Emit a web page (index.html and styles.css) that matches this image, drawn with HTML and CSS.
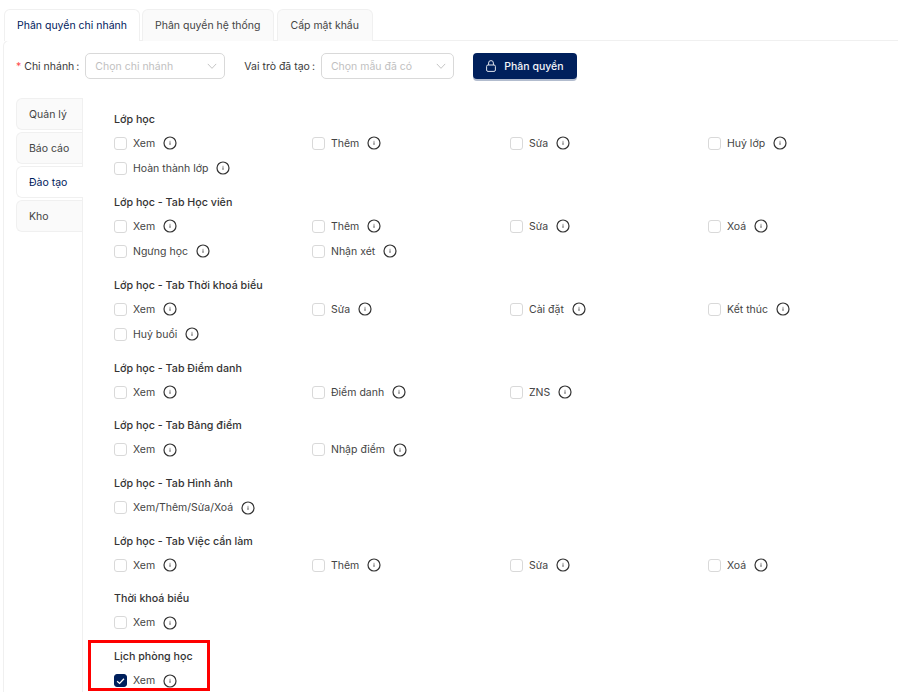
FILE: index.html
```html
<!DOCTYPE html>
<html lang="vi">
<head>
<meta charset="utf-8">
<title>Phân quyền</title>
<link rel="stylesheet" href="styles.css">
</head>
<body>
<svg width="0" height="0" class="defs"><defs>
<symbol id="info" viewBox="0 0 14 14"><circle cx="7" cy="7" r="6" fill="none" stroke="#333" stroke-width="1.2"/><path d="M7 4.9v.7M7 6.3v2.6" stroke="#555" stroke-width="1" fill="none"/></symbol>
</defs></svg>
<div class="tabs">
  <div class="tab active">Phân quyền chi nhánh</div>
  <div class="tab">Phân quyền hệ thống</div>
  <div class="tab">Cấp mật khẩu</div>
</div>
<div class="panel">
  <div class="filters">
    <span class="label"><span class="req">*</span> Chi nhánh<span class="colon">:</span></span>
    <div class="select s1"><span>Chọn chi nhánh</span><svg width="10" height="10" viewBox="0 0 12 12"><path d="M1 3.5 6 8.8l5-5.3" fill="none" stroke="#bfbfbf" stroke-width="1.1"/></svg></div>
    <span class="label l2">Vai trò đã tạo<span class="colon">:</span></span>
    <div class="select s2"><span>Chọn mẫu đã có</span><svg width="10" height="10" viewBox="0 0 12 12"><path d="M1 3.5 6 8.8l5-5.3" fill="none" stroke="#bfbfbf" stroke-width="1.1"/></svg></div>
    <button class="btn"><svg width="10" height="12" viewBox="0 0 10 12"><rect x="0.6" y="5" width="8.8" height="6.4" rx="1.4" fill="none" stroke="#dfe3ec"/><path d="M2.6 5V3a2.4 2.4 0 0 1 4.8 0v2" fill="none" stroke="#dfe3ec"/></svg>Phân quyền</button>
  </div>
  <div class="body">
    <div class="side">
      <div class="side-tab">Quản lý</div>
      <div class="side-tab">Báo cáo</div>
      <div class="side-tab on">Đào tạo</div>
      <div class="side-tab">Kho</div>
    </div>
    <div class="content">
      <section class="group"><h4>Lớp học</h4><div class="grid">
        <label class="item"><i class="box"></i>Xem<svg class="ic"><use href="#info"/></svg></label>
        <label class="item"><i class="box"></i>Thêm<svg class="ic"><use href="#info"/></svg></label>
        <label class="item"><i class="box"></i>Sửa<svg class="ic"><use href="#info"/></svg></label>
        <label class="item"><i class="box"></i>Huỷ lớp<svg class="ic"><use href="#info"/></svg></label>
        <label class="item"><i class="box"></i>Hoàn thành lớp<svg class="ic"><use href="#info"/></svg></label>
      </div></section>
      <section class="group"><h4>Lớp học - Tab Học viên</h4><div class="grid">
        <label class="item"><i class="box"></i>Xem<svg class="ic"><use href="#info"/></svg></label>
        <label class="item"><i class="box"></i>Thêm<svg class="ic"><use href="#info"/></svg></label>
        <label class="item"><i class="box"></i>Sửa<svg class="ic"><use href="#info"/></svg></label>
        <label class="item"><i class="box"></i>Xoá<svg class="ic"><use href="#info"/></svg></label>
        <label class="item"><i class="box"></i>Ngưng học<svg class="ic"><use href="#info"/></svg></label>
        <label class="item"><i class="box"></i>Nhận xét<svg class="ic"><use href="#info"/></svg></label>
      </div></section>
      <section class="group"><h4>Lớp học - Tab Thời khoá biểu</h4><div class="grid">
        <label class="item"><i class="box"></i>Xem<svg class="ic"><use href="#info"/></svg></label>
        <label class="item"><i class="box"></i>Sửa<svg class="ic"><use href="#info"/></svg></label>
        <label class="item"><i class="box"></i>Cài đặt<svg class="ic"><use href="#info"/></svg></label>
        <label class="item"><i class="box"></i>Kết thúc<svg class="ic"><use href="#info"/></svg></label>
        <label class="item"><i class="box"></i>Huỷ buổi<svg class="ic"><use href="#info"/></svg></label>
      </div></section>
      <section class="group"><h4>Lớp học - Tab Điểm danh</h4><div class="grid">
        <label class="item"><i class="box"></i>Xem<svg class="ic"><use href="#info"/></svg></label>
        <label class="item"><i class="box"></i>Điểm danh<svg class="ic"><use href="#info"/></svg></label>
        <label class="item"><i class="box"></i>ZNS<svg class="ic"><use href="#info"/></svg></label>
      </div></section>
      <section class="group"><h4>Lớp học - Tab Bảng điểm</h4><div class="grid">
        <label class="item"><i class="box"></i>Xem<svg class="ic"><use href="#info"/></svg></label>
        <label class="item"><i class="box"></i>Nhập điểm<svg class="ic"><use href="#info"/></svg></label>
      </div></section>
      <section class="group"><h4>Lớp học - Tab Hình ảnh</h4><div class="grid">
        <label class="item"><i class="box"></i>Xem/Thêm/Sửa/Xoá<svg class="ic"><use href="#info"/></svg></label>
      </div></section>
      <section class="group"><h4>Lớp học - Tab Việc cần làm</h4><div class="grid">
        <label class="item"><i class="box"></i>Xem<svg class="ic"><use href="#info"/></svg></label>
        <label class="item"><i class="box"></i>Thêm<svg class="ic"><use href="#info"/></svg></label>
        <label class="item"><i class="box"></i>Sửa<svg class="ic"><use href="#info"/></svg></label>
        <label class="item"><i class="box"></i>Xoá<svg class="ic"><use href="#info"/></svg></label>
      </div></section>
      <section class="group"><h4>Thời khoá biểu</h4><div class="grid">
        <label class="item"><i class="box"></i>Xem<svg class="ic"><use href="#info"/></svg></label>
      </div></section>
      <section class="group"><h4>Lịch phòng học</h4><div class="grid">
        <label class="item"><i class="box checked"><svg width="12" height="12" viewBox="0 0 12 12"><path d="M2.3 6.2 5 8.6l4.8-5" fill="none" stroke="#fff" stroke-width="1.4"/></svg></i>Xem<svg class="ic"><use href="#info"/></svg></label>
      </div></section>
    </div>
  </div>
</div>
<div class="highlight"></div>
</body>
</html>
```
FILE: styles.css
```css
html, body {
  margin: 0;
  padding: 0;
  height: 692px;
  overflow: hidden;
  background: #fff;
  font-family: Inter, "Noto Sans", sans-serif;
  font-size: 10.5px;
  color: #3a3a3a;
}
.defs { position: absolute; }
.tabs {
  display: flex;
  gap: 3px;
  padding: 9px 0 0 4px;
  height: 32px;
}
.tab {
  height: 32px;
  box-sizing: border-box;
  padding: 0 13px 0 12px;
  line-height: 31px;
  background: #fafafa;
  border: 1px solid #f0f0f0;
  border-bottom: 0;
  border-radius: 6px 6px 0 0;
  color: #444;
}
.tab.active {
  padding: 0 12px;
  margin-right: -1px;
  background: #fff;
  color: #00205c;
  position: relative;
  z-index: 1;
}
.panel {
  border-top: 1px solid #f0f0f0;
  border-left: 1px solid #f0f0f0;
  margin-left: 3px;
  border-radius: 6px 0 0 0;
  margin-top: -1px;
}
.filters {
  display: flex;
  align-items: center;
  height: 26px;
  padding: 12px 0 0 12px;
}
.label { color: #3a3a3a; white-space: nowrap; }
.colon { margin-left: 2px; }
.req { color: #ff4d4f; }
.l2 { margin-left: 19px; }
.select {
  height: 26px;
  box-sizing: border-box;
  border: 1px solid #d9d9d9;
  border-radius: 5px;
  margin-left: 6px;
  padding: 0 7px 0 9px;
  display: flex;
  align-items: center;
  justify-content: space-between;
  color: #bfbfbf;
}
.s1 { width: 140px; }
.s2 { width: 133px; }
.btn {
  margin-left: 19px;
  height: 26px;
  width: 104px;
  border: 0;
  border-radius: 4px;
  background: #00205c;
  color: #f3f5fa;
  font: 500 10.5px Inter, "Noto Sans", sans-serif;
  box-shadow: 0 2px 0 rgba(0, 32, 92, 0.3);
  display: flex;
  align-items: center;
  justify-content: center;
  gap: 8px;
}
.body {
  display: flex;
  padding: 19px 0 0 12px;
}
.side {
  width: 66px;
  flex: none;
  display: flex;
  flex-direction: column;
  gap: 2px;
  padding-bottom: 600px;
  border-right: 1px solid #f0f0f0;
}
.side-tab {
  height: 32px;
  box-sizing: border-box;
  line-height: 31px;
  padding-left: 12px;
  background: #fafafa;
  border: 1px solid #f0f0f0;
  border-right: 0;
  border-radius: 6px 0 0 6px;
  color: #444;
}
.side-tab.on {
  background: #fff;
  color: #00205c;
  margin-right: -1px;
  position: relative;
}
.content {
  padding: 12.7px 0 0 31px;
  width: 792px;
  flex: none;
}
.group { margin-bottom: 12.55px; }
h4 {
  margin: 0 0 1.85px;
  height: 18px;
  line-height: 18px;
  font-size: 10.7px;
  font-weight: 500;
  color: #333;
}
.grid {
  display: grid;
  grid-template-columns: repeat(4, 198px);
}
.item {
  height: 25.3px;
  display: flex;
  align-items: center;
  color: #444;
}
.box {
  width: 13px;
  height: 13px;
  box-sizing: border-box;
  border: 1px solid #d9d9d9;
  border-radius: 3px;
  margin-right: 6px;
  display: flex;
  align-items: center;
  justify-content: center;
  flex: none;
}
.box.checked {
  background: #00205c;
  border-color: #00205c;
}
.ic {
  width: 14px;
  height: 14px;
  margin-left: 8px;
  flex: none;
}
.highlight {
  position: absolute;
  left: 88px;
  top: 640px;
  width: 122px;
  height: 51px;
  box-sizing: border-box;
  border: 3px solid #fe0000;
}
```
